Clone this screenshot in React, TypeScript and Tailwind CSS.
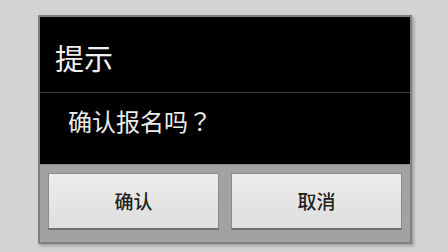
export default function App() {
  return (
    <div
      className="w-[448px] h-[252px] bg-[#d3d3d3] pt-[15px] pl-[38px]"
      style={{ fontFamily: '"Noto Sans CJK SC", "Noto Sans", sans-serif' }}
    >
      <div className="w-[374px] border-2 border-[#808080] shadow-[2px_2px_3px_rgba(0,0,0,0.25)]">
        {/* title */}
        <div className="h-[75px] bg-black flex items-center pl-[15px] pt-[6px] text-[29px] leading-none text-[#f0f0f0]">
          提示
        </div>
        <div className="h-px bg-[#3c3c3c]" />
        {/* message */}
        <div className="h-[71px] bg-black flex items-center pl-[28px] pb-[16px] text-[24px] leading-none text-[#ececec]">
          确认报名吗
          <span style={{ fontFamily: '"Noto Sans CJK JP", sans-serif' }}>？</span>
        </div>
        {/* buttons */}
        <div className="bg-[#a2a2a2] flex gap-[12px] px-[8px] pt-[8px] pb-[12px] border-t border-[#8c8c8c]">
          <button className="flex-1 h-[57px] bg-gradient-to-b from-[#ededed] to-[#dedede] border border-[#8a8a8a] border-b-2 border-b-[#707070] text-[19px] font-medium text-[#222]">
            确认
          </button>
          <button className="flex-1 h-[57px] bg-gradient-to-b from-[#ededed] to-[#dedede] border border-[#8a8a8a] border-b-2 border-b-[#707070] text-[19px] font-medium text-[#222]">
            取消
          </button>
        </div>
      </div>
    </div>
  )
}
